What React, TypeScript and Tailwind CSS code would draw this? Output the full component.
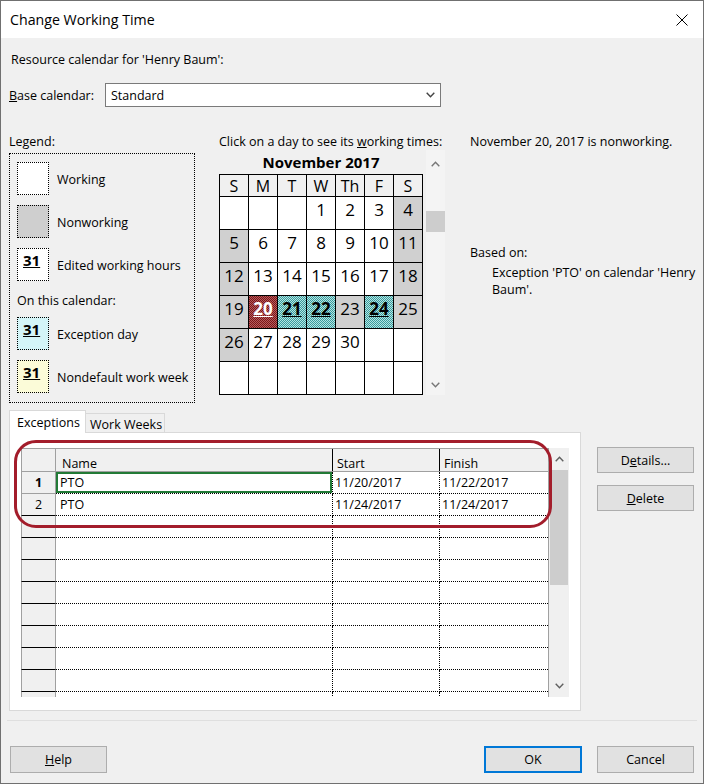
import React from "react";

type Day = { n?: number; t?: "off" | "ex" | "sel" };

const weeks: Day[][] = [
  [{}, {}, {}, { n: 1 }, { n: 2 }, { n: 3 }, { n: 4, t: "off" }],
  [{ n: 5, t: "off" }, { n: 6 }, { n: 7 }, { n: 8 }, { n: 9 }, { n: 10 }, { n: 11, t: "off" }],
  [{ n: 12, t: "off" }, { n: 13 }, { n: 14 }, { n: 15 }, { n: 16 }, { n: 17 }, { n: 18, t: "off" }],
  [
    { n: 19, t: "off" },
    { n: 20, t: "sel" },
    { n: 21, t: "ex" },
    { n: 22, t: "ex" },
    { n: 23, t: "off" },
    { n: 24, t: "ex" },
    { n: 25, t: "off" },
  ],
  [{ n: 26, t: "off" }, { n: 27 }, { n: 28 }, { n: 29 }, { n: 30 }, {}, {}],
  [{}, {}, {}, {}, {}, {}, {}],
];

function dayClass(d: Day) {
  if (d.t === "off") return "bg-[#d0d0d0] text-black";
  if (d.t === "ex")
    return "[background-image:repeating-conic-gradient(#3a9b9b_0_25%,#b4e4e4_0_50%)] [background-size:2px_2px] font-bold underline text-black";
  if (d.t === "sel")
    return "[background-image:repeating-conic-gradient(#7a1619_0_25%,#b65c5c_0_50%)] [background-size:2px_2px] font-bold underline text-white";
  return "bg-white text-black";
}

const Chev = ({ dir, className }: { dir: "up" | "down"; className?: string }) => (
  <svg width="9" height="6" viewBox="0 0 9 6" className={className}>
    <path
      d={dir === "up" ? "M0.7 5.2L4.5 1.2L8.3 5.2" : "M0.7 0.8L4.5 4.8L8.3 0.8"}
      fill="none"
      stroke="currentColor"
      strokeWidth="1.4"
    />
  </svg>
);

const LegendSquare = ({ bg, num }: { bg: string; num?: boolean }) => (
  <div className={`w-[32px] h-[33px] border border-dotted border-black shrink-0 ${bg}`}>
    {num && <div className="pl-[5px] pt-[1px] text-[15px] leading-[20px] font-bold underline">31</div>}
  </div>
);

const Btn = ({ children, className = "" }: { children: React.ReactNode; className?: string }) => (
  <div
    className={`h-[26px] bg-[#e1e1e1] border border-[#adadad] flex items-center justify-center shrink-0 ${className}`}
  >
    {children}
  </div>
);

export default function App() {
  const rows = Array.from({ length: 11 }, (_, i) => i);
  return (
    <div className="relative w-[704px] h-[784px] overflow-hidden bg-[#f0f0f0] border border-[#707070] flex flex-col text-[12.5px] leading-[17px] text-black font-['Open_Sans','Noto_Sans',sans-serif]">
      {/* Title bar */}
      <div className="h-[37px] shrink-0 bg-white flex items-center justify-between">
        <span className="pl-[9px] text-[14.2px]">Change Working Time</span>
        <svg className="mr-[15px]" width="12" height="12" viewBox="0 0 12 12">
          <path d="M0.5 0.5L11.5 11.5M11.5 0.5L0.5 11.5" stroke="#000" strokeWidth="1" />
        </svg>
      </div>

      <div className="flex-1 flex flex-col px-[8px]">
        <div className="mt-[13px] pl-[2px] h-[17px] whitespace-nowrap">Resource calendar for 'Henry Baum':</div>

        <div className="mt-[15px] flex items-center h-[24px]">
          <span className="w-[96px] whitespace-nowrap">
            <u>B</u>ase calendar:
          </span>
          <div className="w-[336px] h-[24px] bg-white border border-[#7a7a7a] flex items-center justify-between pl-[5px] pr-[5px]">
            <span>Standard</span>
            <Chev dir="down" className="text-[#444]" />
          </div>
        </div>

        {/* Columns */}
        <div className="mt-[26px] flex h-[270px]">
          {/* Legend */}
          <div className="w-[186px] flex flex-col shrink-0">
            <div className="h-[17px]">Legend:</div>
            <div className="mt-[3px] h-[250px] border border-dotted border-black pl-[7px] pt-[8px] flex flex-col">
              <div className="flex items-center gap-[8px]">
                <LegendSquare bg="bg-white" />
                <span className="pt-[2px]">Working</span>
              </div>
              <div className="mt-[10px] flex items-center gap-[8px]">
                <LegendSquare bg="bg-[#cfcfcf]" />
                <span className="pt-[2px]">Nonworking</span>
              </div>
              <div className="mt-[10px] flex items-center gap-[8px]">
                <LegendSquare bg="bg-white" num />
                <span className="pt-[2px]">Edited working hours</span>
              </div>
              <div className="mt-[11px] h-[17px]">On this calendar:</div>
              <div className="mt-[8px] flex items-center gap-[8px]">
                <LegendSquare bg="bg-[#d4f5f8]" num />
                <span className="pt-[2px]">Exception day</span>
              </div>
              <div className="mt-[10px] flex items-center gap-[8px]">
                <LegendSquare bg="bg-[#fbfbd8]" num />
                <span className="pt-[2px] whitespace-nowrap">Nondefault work week</span>
              </div>
            </div>
          </div>

          {/* Calendar */}
          <div className="ml-[24px] w-[226px] flex flex-col shrink-0">
            <div className="h-[17px] whitespace-nowrap">
              Click on a day to see its <u>w</u>orking times:
            </div>
            <div className="flex">
              <div className="flex flex-col w-[204px]">
                <div className="h-[24px] leading-[24px] text-center text-[15px] font-bold">November 2017</div>
                <div className="grid grid-cols-[repeat(7,28px)] grid-rows-[21px_repeat(6,32px)] gap-px p-px bg-black w-[204px]">
                  {["S", "M", "T", "W", "Th", "F", "S"].map((h, i) => (
                    <div key={"h" + i} className="bg-[#f0f0f0] flex items-center justify-center text-[16px] leading-[20px]">
                      {h}
                    </div>
                  ))}
                  {weeks.flat().map((d, i) => (
                    <div
                      key={i}
                      className={`flex justify-center pt-[1px] text-[17px] leading-[24px] ${dayClass(d)}`}
                    >
                      {d.n ?? ""}
                    </div>
                  ))}
                </div>
              </div>
              <div className="ml-[3px] w-[19px] flex flex-col bg-[#f4f4f4]">
                <div className="h-[28px] flex items-center justify-center text-[#777]">
                  <Chev dir="up" />
                </div>
                <div className="mt-[33px] h-[21px] bg-[#cdcdcd]" />
                <div className="flex-1" />
                <div className="h-[20px] flex items-center justify-center text-[#777]">
                  <Chev dir="down" />
                </div>
              </div>
            </div>
          </div>

          {/* Info */}
          <div className="ml-[25px] flex flex-col">
            <div className="h-[17px] whitespace-nowrap">November 20, 2017 is nonworking.</div>
            <div className="mt-[94px] h-[17px]">Based on:</div>
            <div className="mt-[3px] pl-[22px] leading-[17px] whitespace-nowrap">
              Exception 'PTO' on calendar 'Henry
              <br />
              Baum'.
            </div>
          </div>
        </div>

        {/* Tabs + panel */}
        <div className="mt-[7px] flex">
          <div className="flex flex-col w-[572px] shrink-0">
            <div className="flex items-end h-[23px] relative z-10">
              <div className="w-[77px] h-[23px] bg-white border border-b-0 border-[#d9d9d9] pl-[7px] pt-[4px] leading-[16px]">
                Exceptions
              </div>
              <div className="w-[79px] h-[19px] mb-px bg-[#f0f0f0] border border-b-0 border-l-0 border-[#d9d9d9] pl-[4px] pt-[3px] leading-[16px] whitespace-nowrap">
                Work Weeks
              </div>
            </div>
            <div className="-mt-px h-[279px] bg-white border border-[#d9d9d9] pl-[11px] pt-[15px]">
              <div className="flex h-[249px] w-[548px] overflow-hidden">
                <div className="w-[527px] flex flex-col shrink-0">
                  {/* header */}
                  <div className="flex h-[24px] shrink-0 border-t border-b border-[#a0a0a0] bg-[#f0f0f0]">
                    <div className="w-[35px] border-l border-r border-[#a0a0a0]" />
                    <div className="w-[277px] border-r border-black pl-[6px] pt-[6px]">Name</div>
                    <div className="w-[107px] border-r border-black pl-[4px] pt-[6px]">Start</div>
                    <div className="w-[108px] pl-[4px] pt-[6px]">Finish</div>
                  </div>
                  {rows.map((i) => {
                    const data =
                      i === 0
                        ? ["PTO", "11/20/2017", "11/22/2017"]
                        : i === 1
                        ? ["PTO", "11/24/2017", "11/24/2017"]
                        : ["", "", ""];
                    return (
                      <div key={i} className="flex h-[22px] shrink-0 leading-[21px]">
                        <div
                          className={`w-[35px] bg-[#f0f0f0] border-l border-r border-b border-l-[#a0a0a0] border-r-[#a0a0a0] text-center ${
                            i === 0 ? "border-b-[#a0a0a0] font-bold" : "border-b-black"
                          }`}
                        >
                          {i < 2 ? i + 1 : ""}
                        </div>
                        <div
                          className={`w-[277px] border-b border-r border-dotted border-black pl-[4px] ${
                            i === 0 ? "shadow-[inset_0_0_0_2px_#227a36]" : ""
                          }`}
                        >
                          {data[0]}
                        </div>
                        <div className="w-[107px] border-b border-r border-dotted border-black pl-[2px]">{data[1]}</div>
                        <div className="w-[108px] border-b border-dotted border-black pl-[2px]">{data[2]}</div>
                      </div>
                    );
                  })}
                </div>
                <div className="w-[21px] border-l border-[#a0a0a0] bg-[#f0f0f0] flex flex-col shrink-0">
                  <div className="h-[22px] flex items-center justify-center text-[#606060]">
                    <Chev dir="up" />
                  </div>
                  <div className="mx-px h-[115px] bg-[#cdcdcd]" />
                  <div className="flex-1" />
                  <div className="h-[22px] flex items-center justify-center text-[#606060]">
                    <Chev dir="down" />
                  </div>
                </div>
              </div>
            </div>
          </div>
          <div className="ml-[16px] pt-[37px] flex flex-col gap-[12px]">
            <Btn className="w-[97px]">
              D<u>e</u>tails...
            </Btn>
            <Btn className="w-[97px]">
              <u>D</u>elete
            </Btn>
          </div>
        </div>

        {/* Footer */}
        <div className="mt-[9px] -mx-[2px] h-px bg-[#dfdfdf] shrink-0" />
        <div className="mt-[24px] flex items-center h-[27px] pt-px">
          <Btn className="ml-px w-[97px] h-[27px]">
            <u>H</u>elp
          </Btn>
          <div className="flex-1" />
          <div className="w-[98px] h-[27px] bg-[#e1e1e1] border-2 border-[#0078d7] flex items-center justify-center">
            OK
          </div>
          <Btn className="ml-[15px] mr-px w-[97px] h-[27px]">Cancel</Btn>
        </div>
      </div>

      {/* Annotation ring */}
      <div className="absolute left-[13px] top-[439px] w-[538px] h-[88px] border-[3px] border-[#a31d2b] rounded-[22px] pointer-events-none" />
    </div>
  );
}
